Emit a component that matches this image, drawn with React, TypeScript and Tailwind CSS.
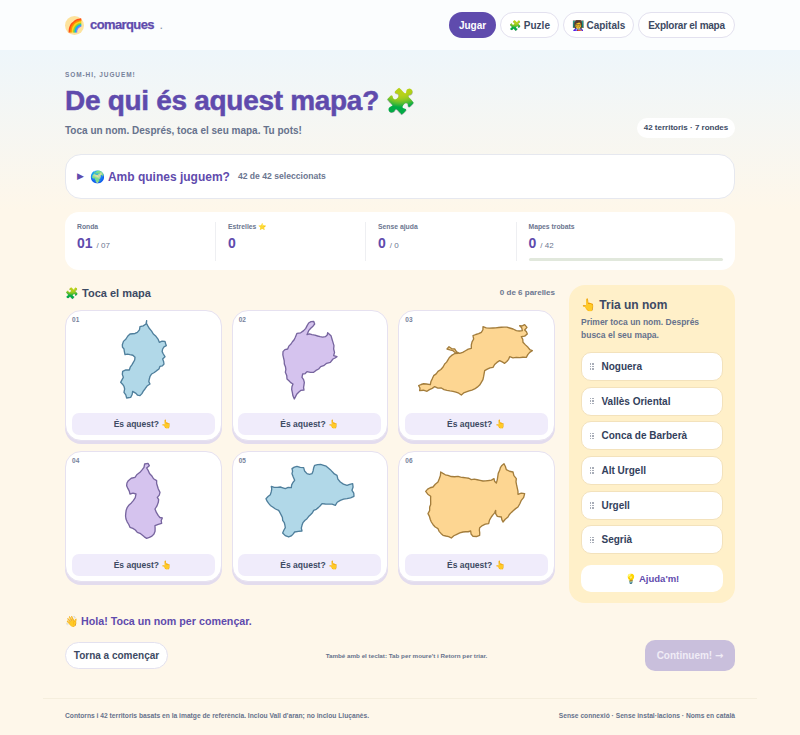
const shapes = [
  { off: [100, 315], s: 'fill-[#b1d8e8] stroke-[#4f7f9c]', d: 'M140 20L143 35L160 60L178 85L195 82L199 95L188 105L190 120L195 128L188 135L192 150L180 157L170 170L155 180L148 195L150 210L135 225L120 245L108 238L98 232L92 250L80 252L72 235L74 225L62 205L70 190L68 172L88 168L100 145L105 130L90 122L75 122L72 105L67 92L78 75L90 60L112 55L120 38L138 30Z' },
  { off: [270, 315], s: 'fill-[#d5c3ee] stroke-[#77659f]', d: 'M130 22L133 30L122 42L115 50L110 62L125 62L142 66L165 68L172 56L182 65L188 85L190 105L190 125L200 128L188 135L180 145L160 155L145 165L130 175L110 173L97 180L95 190L102 205L101 228L85 235L72 255L66 235L68 210L50 195L45 175L42 150L38 113L52 105L62 90L75 70L80 58L100 50L115 27Z' },
  { off: [410, 315], s: 'fill-[#fdd692] stroke-[#a37d3c]', d: 'M27 215L50 210L62 212L72 185L85 172L105 150L125 125L145 118L130 110L112 105L118 98L135 105L150 118L185 103L192 75L190 65L215 55L220 38L250 42L300 42L320 50L338 50L330 35L345 32L352 40L345 48L353 60L335 68L340 85L355 100L368 110L350 130L320 130L300 128L285 148L270 140L250 160L225 170L215 205L195 225L155 243L130 232L95 222L75 218L52 232L30 230Z' },
  { off: [50, 445], s: 'fill-[#d5c3ee] stroke-[#77659f]', d: 'M282 70L284 60L294 58L298 65L290 72L295 80L305 95L320 110L325 135L330 145L322 160L325 175L315 195L325 215L337 222L335 238L315 245L312 270L290 283L262 265L240 250L228 225L232 190L250 170L258 150L240 150L230 125L235 110L255 100L270 85Z' },
  { off: [255, 458], s: 'fill-[#b1d8e8] stroke-[#4f7f9c]', d: 'M110 35L125 28L145 32L155 50L170 50L178 25L205 25L225 38L245 55L255 75L275 85L292 80L290 100L296 118L275 125L255 130L240 145L200 140L175 160L155 185L140 205L140 222L118 225L100 240L82 228L90 212L82 190L70 160L52 150L32 125L45 113L48 88L75 90L90 95L108 92L118 70L110 50Z' },
  { off: [415, 458], s: 'fill-[#fdd692] stroke-[#a37d3c]', d: 'M78 45L100 55L130 58L170 68L205 72L238 65L245 78L255 40L268 20L275 38L295 45L305 65L310 112L330 110L320 130L310 150L280 180L265 195L260 180L248 178L243 160L230 180L222 200L195 212L195 235L175 238L168 222L145 225L110 243L85 235L70 215L50 195L40 170L45 150L48 118L33 103L55 90L70 75Z' },
];
const names = ['Noguera', 'Vallès Oriental', 'Conca de Barberà', 'Alt Urgell', 'Urgell', 'Segrià'];
const viewX = [67, 233.67, 400.33, 67, 233.67, 400.33];
const viewY = [315, 315, 315, 456, 456, 456];

// Roughen a polygon outline so it reads like a hand-traced county border.
function rough(d: string, seed: number) {
  const pts = d.replace(/Z/g, '').slice(1).split('L').map((p) => p.split(' ').map(Number));
  let n = seed;
  const out: string[] = [];
  pts.forEach((a, i) => {
    const b = pts[(i + 1) % pts.length];
    const len = Math.hypot(b[0] - a[0], b[1] - a[1]);
    const steps = Math.max(1, Math.round(len / 9));
    for (let k = 0; k < steps; k++) {
      const t = k / steps;
      n += 1;
      const j = k === 0 ? 0 : Math.sin(n * 12.9898) * 2.6;
      out.push(`${(a[0] + (b[0] - a[0]) * t - ((b[1] - a[1]) / len) * j).toFixed(1)} ${(a[1] + (b[1] - a[1]) * t + ((b[0] - a[0]) / len) * j).toFixed(1)}`);
    }
  });
  return `M${out.join('L')}Z`;
}

function Stat({ label, value, total, last, first }: { label: React.ReactNode; value: string; total?: string; last?: boolean; first?: boolean }) {
  return (
    <div className={`${first ? '' : 'pl-[12px]'} ${last ? '' : 'border-r border-[#eeeff2]'}`}>
      <div className="text-[6.8px] font-bold leading-[10px] text-[#6b7690]">{label}</div>
      <div className="mt-[1px] flex items-baseline gap-[4px]">
        <span className="text-[14px] font-bold leading-[20px] text-[#5f4bad]">{value}</span>
        {total && <span className="text-[8px] text-[#6b7690]">{total}</span>}
      </div>
      {last && <div className="mt-[5px] h-[3px] w-[194px] rounded-full bg-[#e1e8dc]" />}
    </div>
  );
}

export default function App() {
  return (
    <div className="h-[735px] overflow-hidden bg-[linear-gradient(180deg,#eef6fb_0px,#eef6fb_50px,#fef7ea_210px,#fef7ea_100%)] font-['Liberation_Sans',sans-serif] text-[#3d4a63]">
      <header className="flex h-[50px] items-center justify-between bg-[#fbfdfe] px-[65px]">
        <div className="flex items-center">
          <div className="flex h-[19px] w-[19px] items-center justify-center rounded-full bg-[#fde39d] text-[13px] leading-none">🌈</div>
          <span className="ml-[6px] text-[13px] font-bold tracking-[-0.6px] text-[#5f4bad] [-webkit-text-stroke:0.25px_#5f4bad]">comarques</span>
          <span className="ml-[6px] mt-[4px] text-[9px] font-bold text-[#8c97ad]">.</span>
        </div>
        <nav className="flex gap-[4px] text-[10px] font-bold">
          <a className="flex h-[26px] w-[47px] items-center justify-center rounded-full bg-[#5f4bad] text-white">Jugar</a>
          <a className="flex h-[26px] w-[59px] items-center justify-center rounded-full border-[1.5px] border-[#e3e1ef] bg-white">🧩 Puzle</a>
          <a className="flex h-[26px] w-[71px] items-center justify-center rounded-full border-[1.5px] border-[#e3e1ef] bg-white">👩‍🏫 Capitals</a>
          <a className="flex h-[26px] w-[97px] items-center justify-center rounded-full border-[1.5px] border-[#e3e1ef] bg-white tracking-[-0.25px]">Explorar el mapa</a>
        </nav>
      </header>

      <main className="px-[65px] pt-[20px]">
        <div className="text-[6.5px] font-bold leading-[9px] tracking-[0.9px] text-[#77829b]">SOM-HI, JUGUEM!</div>
        <div className="flex items-end justify-between">
          <div>
            <h1 className="mt-[3px] flex h-[38px] items-center text-[28px] font-bold leading-[38px] tracking-[-0.3px] text-[#5f4bad] [-webkit-text-stroke:0.5px_#5f4bad]">De qui és aquest mapa?<span className="ml-[6px] text-[25px] tracking-normal [-webkit-text-stroke:0]">🧩</span></h1>
            <p className="mt-[4px] text-[10px] font-bold leading-[14px] text-[#66728c]">Toca un nom. Després, toca el seu mapa. Tu pots!</p>
          </div>
          <div className="flex h-[20px] w-[98px] items-center justify-center rounded-full bg-white text-[8px] font-bold">42 territoris · 7 rondes</div>
        </div>

        <div className="mt-[16px] flex h-[45px] items-center rounded-[16px] border-[1.5px] border-[#e6e8ef] bg-white pl-[11px]">
          <span className="text-[9px] leading-none text-[#5f4bad]">▶</span>
          <span className="ml-[6px] text-[12px] font-bold text-[#5f4bad]">🌍 Amb quines juguem?</span>
          <span className="ml-[8px] text-[8.6px] font-bold text-[#6b7690]">42 de 42 seleccionats</span>
        </div>

        <div className="mt-[13px] grid h-[58px] grid-cols-[139px_150px_150.5px_1fr] rounded-[14px] bg-white py-[10px] pl-[12px]">
          <Stat first label="Ronda" value="01" total="/ 07" />
          <Stat label="Estrelles ⭐" value="0" />
          <Stat label="Sense ajuda" value="0" total="/ 0" />
          <Stat label="Mapes trobats" value="0" total="/ 42" last />
        </div>

        <div className="mt-[15px] flex items-start gap-[14px]">
          <section className="w-[490px]">
            <div className="flex h-[25px] items-start justify-between pt-[1px]">
              <h2 className="text-[11px] font-bold leading-[14px]">🧩 Toca el mapa</h2>
              <span className="text-[8px] font-bold leading-[14px] text-[#6b7690]">0 de 6 parelles</span>
            </div>
            <div className="grid grid-cols-3 gap-[10px]">
              {shapes.map((m, i) => (
                <article key={i} className="relative h-[131px] rounded-[16px] border-[1.5px] border-[#e6e1f0] bg-white pt-[3px] shadow-[0_3px_0_#e3dcee]">
                  <span className="absolute left-[6px] top-[4px] text-[6.5px] font-bold text-[#77829b]">0{i + 1}</span>
                  <svg className="block h-[90px] w-full" viewBox={`${viewX[i]} ${viewY[i]} 152.67 90`}>
                    <g transform={`translate(${m.off[0]} ${m.off[1]}) scale(0.3333)`}>
                      <path d={rough(m.d, i * 17 + 3)} className={m.s} strokeWidth="4" strokeLinejoin="round" />
                    </g>
                  </svg>
                  <button className="mx-[5.5px] mt-[9px] flex h-[22px] w-[143px] items-center justify-center rounded-[7px] bg-[#f0ecfb] text-[8.5px] font-bold">És aquest? 👆</button>
                </article>
              ))}
            </div>
          </section>
          <aside className="h-[318px] w-[166px] rounded-[16px] bg-[#fff0c9] px-[12px] pt-[13px]">
            <h2 className="text-[12px] font-bold leading-[14px]">👆 Tria un nom</h2>
            <p className="mt-[4px] text-[8.5px] font-bold leading-[13px] text-[#66728c]">Primer toca un nom. Després busca el seu mapa.</p>
            <ul className="mt-[10px] flex flex-col gap-[5.7px]">
              {names.map((n) => (
                <li key={n} className="flex h-[29px] items-center rounded-[10px] border-[1.5px] border-[#f3e2bc] bg-white pl-[7.5px] text-[10px] font-bold text-[#33415c]">
                  <span className="mr-[8px] grid grid-cols-2 gap-[1px]">
                    {[0, 1, 2, 3, 4, 5].map((d) => <i key={d} className="block h-[1.5px] w-[1.5px] bg-[#a8adb8]" />)}
                  </span>
                  {n}
                </li>
              ))}
            </ul>
            <button className="mt-[11px] flex h-[27px] w-[142px] items-center justify-center rounded-[10px] bg-white text-[9.5px] font-bold text-[#5f4bad]">💡 Ajuda'm!</button>
          </aside>
        </div>

        <div className="mt-[10px] text-[10.7px] font-bold leading-[16px] text-[#5f4bad]">👋 Hola! Toca un nom per començar.</div>
        <div className="mt-[11px] flex items-center justify-between">
          <button className="h-[27px] w-[103px] rounded-full border-[1.5px] border-[#e3e1ef] bg-white text-[10px] font-bold">Torna a començar</button>
          <span className="text-[6.25px] font-bold text-[#66728c]">També amb el teclat: Tab per moure't i Retorn per triar.</span>
          <button className="h-[31px] w-[90px] rounded-[10px] bg-[#c9bfdc] text-[10px] font-bold text-[#f0ecf6]">Continuem! <span className="font-['DejaVu_Sans',sans-serif]">→</span></button>
        </div>
      </main>

      <footer className="mx-[43px] mt-[27px] flex h-[34px] items-center justify-between border-t border-[#f5eedd] px-[22px] pt-[1px] text-[6.7px] font-bold text-[#66728c]">
        <span>Contorns i 42 territoris basats en la imatge de referència. Inclou Vall d'aran; no inclou Lluçanès.</span>
        <span>Sense connexió · Sense instal·lacions · Noms en català</span>
      </footer>
    </div>
  );
}
